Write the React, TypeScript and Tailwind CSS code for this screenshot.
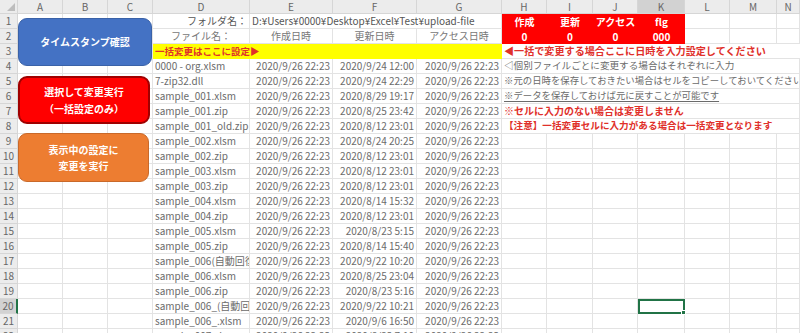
import React from "react";

const cols = "grid grid-cols-[18px_45px_45px_45px_97px_83px_84px_85px_45px_46px_45px_47px_45px_47px_1fr]";
const letters = ["A", "B", "C", "D", "E", "F", "G", "H", "I", "J", "K", "L", "M", "N"];

const rows: [string, string, string, string][] = [
  ["0000 - org.xlsm", "2020/9/26 22:23", "2020/9/24 12:00", "2020/9/26 22:23"],
  ["7-zip32.dll", "2020/9/26 22:23", "2020/9/24 22:29", "2020/9/26 22:23"],
  ["sample_001.xlsm", "2020/9/26 22:23", "2020/8/29 19:17", "2020/9/26 22:23"],
  ["sample_001.zip", "2020/9/26 22:23", "2020/8/25 23:42", "2020/9/26 22:23"],
  ["sample_001_old.zip", "2020/9/26 22:23", "2020/8/12 23:01", "2020/9/26 22:23"],
  ["sample_002.xlsm", "2020/9/26 22:23", "2020/8/24 20:25", "2020/9/26 22:23"],
  ["sample_002.zip", "2020/9/26 22:23", "2020/8/12 23:01", "2020/9/26 22:23"],
  ["sample_003.xlsm", "2020/9/26 22:23", "2020/8/12 23:01", "2020/9/26 22:23"],
  ["sample_003.zip", "2020/9/26 22:23", "2020/8/12 23:01", "2020/9/26 22:23"],
  ["sample_004.xlsm", "2020/9/26 22:23", "2020/8/14 15:32", "2020/9/26 22:23"],
  ["sample_004.zip", "2020/9/26 22:23", "2020/8/12 23:01", "2020/9/26 22:23"],
  ["sample_005.xlsm", "2020/9/26 22:23", "2020/8/23 5:15", "2020/9/26 22:23"],
  ["sample_005.zip", "2020/9/26 22:23", "2020/8/14 15:40", "2020/9/26 22:23"],
  ["sample_006(自動回復済み).xlsm", "2020/9/26 22:23", "2020/9/22 10:20", "2020/9/26 22:23"],
  ["sample_006.xlsm", "2020/9/26 22:23", "2020/8/25 23:04", "2020/9/26 22:23"],
  ["sample_006.zip", "2020/9/26 22:23", "2020/8/23 5:16", "2020/9/26 22:23"],
  ["sample_006_(自動回復済み).xlsm", "2020/9/26 22:23", "2020/9/22 10:21", "2020/9/26 22:23"],
  ["sample_006_.xlsm", "2020/9/26 22:23", "2020/9/6 16:50", "2020/9/26 22:23"],
  ["sample_007.xlsm", "2020/9/26 22:23", "2020/8/23 7:10", "2020/9/26 22:23"],
];

// notes in column H, rows 4-8
const notes: { text: string; cls: string }[] = [
  { text: "◁個別ファイルごとに変更する場合はそれぞれに入力", cls: "text-[#6b6b6b] text-[9.6px]" },
  { text: "※元の日時を保存しておきたい場合はセルをコピーしておいてください", cls: "text-[#6b6b6b] text-[9.4px]" },
  { text: "※データを保存しておけば元に戻すことが可能です", cls: "text-[#6b6b6b] text-[9.4px] underline underline-offset-2" },
  { text: "※セルに入力のない場合は変更しません", cls: "text-[#e0302a] font-bold" },
  { text: "【注意】一括変更セルに入力がある場合は一括変更となります", cls: "text-[#e0302a] font-bold text-[9.6px]" },
];

const cell = "h-[15px] border-r border-b border-[#e3e3e3] flex items-center whitespace-nowrap overflow-hidden px-[2px]";

function RowNum({ n, active }: { n: number; active?: boolean }) {
  return (
    <div
      className={
        "h-[15px] border-r border-b border-[#d6d6d6] flex items-center justify-center text-[10px] text-[#666] " +
        (active ? "bg-[#d2d2d2] border-r-2 border-r-[#217346]" : "bg-[#ececec]")
      }
    >
      {n}
    </div>
  );
}

function Empty() {
  return <div className={cell} />;
}

export default function App() {
  return (
    <div className="relative w-[800px] h-[333px] overflow-hidden bg-white font-['Noto_Sans_CJK_JP',sans-serif] text-[10px] leading-none">
      {/* column headers */}
      <div className={cols + " h-[14px]"}>
        <div className="bg-[#ececec] border-r border-b border-[#d6d6d6] flex items-end justify-end p-[2px]">
          <svg width="8" height="8" viewBox="0 0 8 8">
            <polygon points="8,0 8,8 0,8" fill="#bdbdbd" />
          </svg>
        </div>
        {letters.map((l) => (
          <div
            key={l}
            className={
              "border-r border-b border-[#d6d6d6] flex items-center justify-center text-[10px] text-[#666] " +
              (l === "K" ? "bg-[#d2d2d2]" : "bg-[#ececec]")
            }
          >
            {l}
          </div>
        ))}
      </div>

      {/* row 1 */}
      <div className={cols}>
        <RowNum n={1} />
        <Empty />
        <Empty />
        <Empty />
        <div className={cell + " justify-end text-[#555]"}>フォルダ名：</div>
        <div className={cell + " col-span-3 text-[#555]"}>D:¥Users¥0000¥Desktop¥Excel¥Test¥upload-file</div>
        {["作成", "更新", "アクセス", "flg"].map((t) => (
          <div key={t} className="h-[15px] bg-[#ff0000] flex items-center justify-center text-white font-bold">
            {t}
          </div>
        ))}
        <Empty />
        <Empty />
        <Empty />
      </div>

      {/* row 2 */}
      <div className={cols}>
        <RowNum n={2} />
        <Empty />
        <Empty />
        <Empty />
        <div className={cell + " justify-center text-[#777]"}>ファイル名：</div>
        <div className={cell + " justify-center text-[#777]"}>作成日時</div>
        <div className={cell + " justify-center text-[#777]"}>更新日時</div>
        <div className={cell + " justify-center text-[#777]"}>アクセス日時</div>
        {["0", "0", "0", "000"].map((t, i) => (
          <div key={i} className="h-[15px] bg-[#ff0000] flex items-center justify-center text-white font-bold">
            {t}
          </div>
        ))}
        <Empty />
        <Empty />
        <Empty />
      </div>

      {/* row 3 */}
      <div className={cols}>
        <RowNum n={3} />
        <Empty />
        <Empty />
        <Empty />
        <div className="h-[15px] col-span-4 bg-[#ffff00] flex items-center px-[2px] text-[#e0302a] font-bold whitespace-nowrap text-[9.5px]">
          一括変更はここに設定▶
        </div>
        <div className={cell + " col-span-7 text-[#e0302a] font-bold border-r-0 text-[10.1px]"}>
          ◀一括で変更する場合ここに日時を入力設定してください
        </div>
      </div>

      {/* data rows */}
      {rows.map((r, i) => {
        const n = i + 4;
        const note = notes[i];
        return (
          <div key={n} className={cols}>
            <RowNum n={n} active={n === 20} />
            <Empty />
            <Empty />
            <Empty />
            <div className={cell + " text-[#6b6b6b]"}>{r[0]}</div>
            <div className={cell + " justify-end text-[#6b6b6b]"}>{r[1]}</div>
            <div className={cell + " justify-end text-[#6b6b6b]"}>{r[2]}</div>
            <div className={cell + " justify-end text-[#6b6b6b]"}>{r[3]}</div>
            {note ? (
              <div className={cell + " col-span-7 " + note.cls}>{note.text}</div>
            ) : (
              <>
                <Empty />
                <Empty />
                <Empty />
                {n === 20 ? (
                  <div className="relative h-[15px] border-2 border-[#217346]">
                    <span className="absolute -right-[3px] -bottom-[3px] w-[5px] h-[5px] bg-[#217346] border border-white" />
                  </div>
                ) : (
                  <Empty />
                )}
                <Empty />
                <Empty />
                <Empty />
              </>
            )}
          </div>
        );
      })}

      {/* floating shapes over A:C */}
      <div className="absolute left-[18px] top-[18px] w-[134px] h-[48px] rounded-[9px] bg-[#4472c4] border border-[#3a62a8] flex items-center justify-center text-white font-bold text-[10px]">
        タイムスタンプ確認
      </div>
      <div className="absolute left-[18px] top-[76px] w-[132px] h-[48px] rounded-[9px] bg-[#ff0000] border-2 border-[#a00000] flex flex-col items-center justify-center gap-[7px] text-white font-bold text-[10px]">
        <span>選択して変更実行</span>
        <span>（一括設定のみ）</span>
      </div>
      <div className="absolute left-[18px] top-[133px] w-[131px] h-[49px] rounded-[9px] bg-[#ed7d31] border border-[#c9692a] flex flex-col items-center justify-center gap-[6px] text-white font-bold text-[10px]">
        <span>表示中の設定に</span>
        <span>変更を実行</span>
      </div>
    </div>
  );
}
